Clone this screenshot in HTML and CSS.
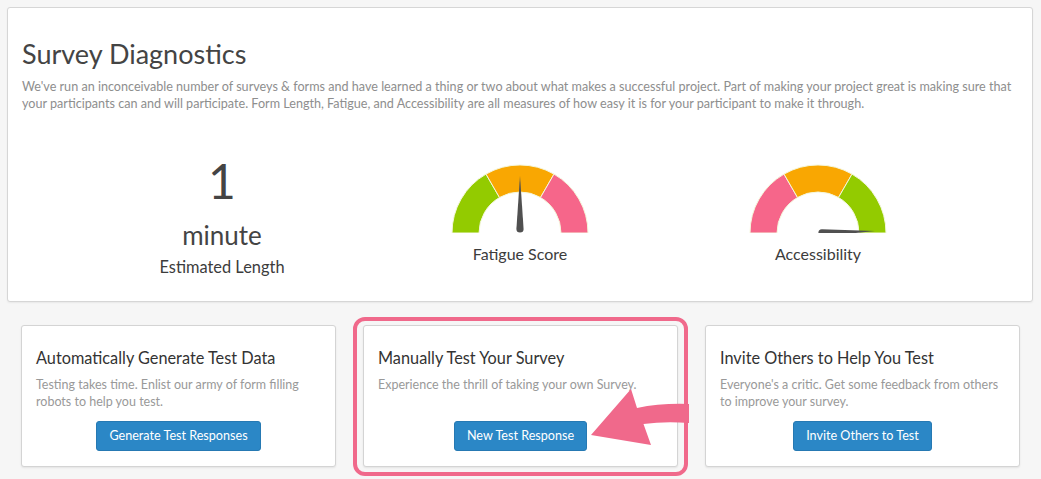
FILE: index.html
```html
<!DOCTYPE html>
<html lang="en">
<head>
<meta charset="utf-8">
<title>Survey Diagnostics</title>
<link rel="stylesheet" href="styles.css">
</head>
<body>
<div class="page">
  <section class="diag">
    <h1 class="diag-title">Survey Diagnostics</h1>
    <p class="diag-desc">We've run an inconceivable number of surveys &amp; forms and have learned a thing or two about what makes a successful project. Part of making your project great is making sure that your participants can and will participate. Form Length, Fatigue, and Accessibility are all measures of how easy it is for your participant to make it through.</p>
    <div class="stats">
      <div class="stat">
        <div class="stat-num">1</div>
        <div class="stat-unit">minute</div>
        <div class="stat-label">Estimated Length</div>
      </div>
      <div class="stat">
        <svg class="gauge" width="140" height="70" viewBox="0 0 140 70">
          <path class="seg-green" d="M2 70 A68 68 0 0 1 36 11.11 L49.5 34.49 A41 41 0 0 0 29 70 Z"/>
          <path class="seg-orange" d="M36 11.11 A68 68 0 0 1 104 11.11 L90.5 34.49 A41 41 0 0 0 49.5 34.49 Z"/>
          <path class="seg-pink" d="M104 11.11 A68 68 0 0 1 138 70 L111 70 A41 41 0 0 0 90.5 34.49 Z"/>
          <path class="needle" d="M70 13 L73.6 66 A3.6 3.6 0 0 1 66.4 66 Z"/>
        </svg>
        <div class="gauge-label">Fatigue Score</div>
      </div>
      <div class="stat">
        <svg class="gauge" width="140" height="70" viewBox="0 0 140 70">
          <path class="seg-pink" d="M2 70 A68 68 0 0 1 36 11.11 L49.5 34.49 A41 41 0 0 0 29 70 Z"/>
          <path class="seg-orange" d="M36 11.11 A68 68 0 0 1 104 11.11 L90.5 34.49 A41 41 0 0 0 49.5 34.49 Z"/>
          <path class="seg-green" d="M104 11.11 A68 68 0 0 1 138 70 L111 70 A41 41 0 0 0 90.5 34.49 Z"/>
          <g transform="rotate(88 70 70)">
            <path class="needle" d="M70 13 L73.6 66 A3.6 3.6 0 0 1 66.4 66 Z"/>
          </g>
        </svg>
        <div class="gauge-label">Accessibility</div>
      </div>
    </div>
  </section>

  <div class="actions">
    <div class="card">
      <h2 class="card-title">Automatically Generate Test Data</h2>
      <p class="card-desc">Testing takes time. Enlist our army of form filling robots to help you test.</p>
      <button class="btn">Generate Test Responses</button>
    </div>
    <div class="focus">
      <div class="card">
        <h2 class="card-title">Manually Test Your Survey</h2>
        <p class="card-desc">Experience the thrill of taking your own Survey.</p>
        <button class="btn">New Test Response</button>
      </div>
      <svg class="arrow" width="110" height="75" viewBox="0 0 110 75">
        <path d="M8 55 L48 9 L54 28 Q78 23 106 24 L106 43 Q82 41 60.5 44 L68 65 Z"/>
      </svg>
    </div>
    <div class="card">
      <h2 class="card-title">Invite Others to Help You Test</h2>
      <p class="card-desc">Everyone's a critic. Get some feedback from others to improve your survey.</p>
      <button class="btn">Invite Others to Test</button>
    </div>
  </div>
</div>
</body>
</html>
```

FILE: styles.css
```css
* { box-sizing: border-box; }

html, body {
  margin: 0;
  padding: 0;
  background: #f6f6f6;
  font-family: Lato, "Open Sans", "Liberation Sans", sans-serif;
  color: #444;
}

body {
  min-height: 479px;
}

.page {
  padding: 7px 8px 12px 7px;
  width: 1041px;
}

.diag {
  width: 1026px;
  height: 295px;
  background: #fff;
  border: 1px solid #d6d6d6;
  border-radius: 3px;
  box-shadow: 0 1px 2px rgba(0, 0, 0, 0.06);
  padding: 30px 14px 0 14px;
}

.diag-title {
  margin: 0;
  font-size: 27px;
  line-height: 32px;
  font-weight: 400;
  color: #444;
}

.diag-desc {
  margin: 8px 0 0 0;
  font-size: 12.6px;
  line-height: 17px;
  color: #8e8e8e;
}

.stats {
  margin-top: 45px;
  display: grid;
  grid-template-columns: repeat(3, 298px);
  justify-content: center;
  align-items: start;
}

.stat {
  display: flex;
  flex-direction: column;
  align-items: center;
}

.stat-num {
  font-size: 48px;
  line-height: 48px;
  color: #444;
}

.stat-unit {
  margin-top: 15px;
  font-size: 26px;
  line-height: 30px;
  color: #444;
}

.stat-label {
  margin-top: 7px;
  font-size: 16.4px;
  line-height: 20px;
  color: #3c3c3c;
}

.gauge {
  display: block;
  margin-top: 6px;
}

.seg-green { fill: #93cb00; stroke: #f4f7dc; stroke-width: 1; }
.seg-orange { fill: #f9a702; stroke: #f4f7dc; stroke-width: 1; }
.seg-pink { fill: #f6668a; stroke: #f4f7dc; stroke-width: 1; }
.needle { fill: #505050; }

.gauge-label {
  margin-top: 11px;
  font-size: 16px;
  line-height: 20px;
  color: #3c3c3c;
}

.actions {
  margin-top: 23px;
  padding-left: 14px;
  display: flex;
  align-items: flex-start;
  gap: 27px;
}

.focus {
  position: relative;
  width: 315px;
  height: 142px;
}

.focus::before {
  content: "";
  position: absolute;
  top: -8px;
  left: -10px;
  right: -10px;
  bottom: -9px;
  border: 4px solid #f0698b;
  border-radius: 12px;
}

.arrow {
  position: absolute;
  left: 220px;
  top: 55px;
}

.arrow path { fill: #f0698b; }

.card {
  position: relative;
  width: 315px;
  height: 142px;
  background: #fff;
  border: 1px solid #d4d4d4;
  border-radius: 3px;
  box-shadow: 0 1px 2px rgba(0, 0, 0, 0.08);
  padding: 21px 14px 15px 14px;
  display: flex;
  flex-direction: column;
}

.card-title {
  margin: 0;
  font-size: 16.3px;
  line-height: 22px;
  font-weight: 400;
  color: #333;
}

.card-desc {
  margin: 7px 0 0 0;
  font-size: 12.5px;
  line-height: 17px;
  color: #999;
}

.btn {
  margin-top: auto;
  align-self: center;
  height: 30px;
  padding: 0 12px;
  border: 1px solid #2679b3;
  border-radius: 3px;
  background: #2b87c6;
  color: #fff;
  font-family: Lato, "Open Sans", "Liberation Sans", sans-serif;
  font-size: 12.6px;
  line-height: 28px;
}
```
